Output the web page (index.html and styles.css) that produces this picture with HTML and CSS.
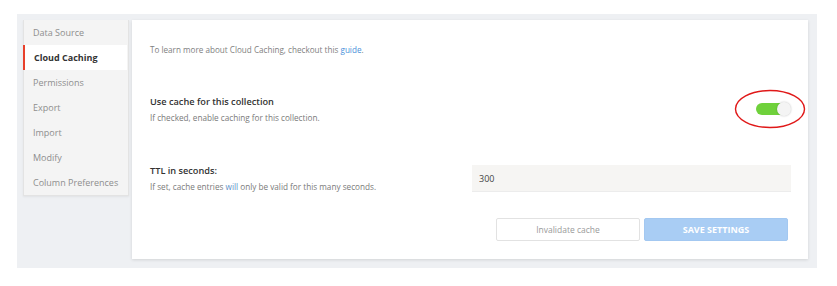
FILE: index.html
```html
<!DOCTYPE html>
<html>
  <head>
    <title>Cloud Caching</title>
    <link rel="stylesheet" href="styles.css">
  </head>
  <body>
    <div class="frame">
      <ul class="sidebar">
        <li>Data Source</li>
        <li class="active">Cloud Caching</li>
        <li>Permissions</li>
        <li>Export</li>
        <li>Import</li>
        <li>Modify</li>
        <li>Column Preferences</li>
      </ul>
      <div class="card">
        <p class="intro">To learn more about Cloud Caching, checkout this <a href="#">guide</a>.</p>

        <div class="setting setting-cache">
          <div class="setting-text">
            <div class="setting-title">Use cache for this collection</div>
            <div class="setting-desc">If checked, enable caching for this collection.</div>
          </div>
          <div class="toggle-wrap">
            <span class="toggle"><span class="knob"></span></span>
            <svg class="highlight" width="72" height="40" viewBox="0 0 72 40">
              <ellipse cx="36" cy="20" rx="34.5" ry="18.5" fill="none" stroke="#e01818" stroke-width="1.4" />
            </svg>
          </div>
        </div>

        <div class="setting setting-ttl">
          <div class="setting-text">
            <div class="setting-title">TTL in seconds:</div>
            <div class="setting-desc">If set, cache entries <span class="hl">will</span> only be valid for this many seconds.</div>
          </div>
          <input class="ttl-input" type="text" value="300">
        </div>

        <div class="actions">
          <button class="btn btn-outline">Invalidate cache</button>
          <button class="btn btn-primary">SAVE SETTINGS</button>
        </div>
      </div>
    </div>
  </body>
</html>
```

FILE: styles.css
```css
body {
  margin: 0;
  background: #ffffff;
  font-family: "Open Sans", "Liberation Sans", Arial, sans-serif;
}
.frame {
  display: flex;
  align-items: flex-start;
  width: 788px;
  height: 242px;
  margin: 14px 0 0 17px;
  padding: 6px;
  background: #eef0f3;
}
.sidebar {
  list-style: none;
  margin: 0;
  padding: 0;
  width: 104px;
  background: #f4f4f4;
  border: 1px solid #e3e3e3;
  border-top: none;
  box-shadow: 0 1px 2px rgba(0, 0, 0, 0.06);
}
.sidebar li {
  height: 25px;
  line-height: 25px;
  padding-left: 9px;
  font-size: 9px;
  color: #8e8e8e;
  white-space: nowrap;
}
.sidebar li.active {
  background: #ffffff;
  color: #333333;
  font-weight: 700;
  font-size: 9px;
  border-left: 2px solid #e8412c;
  padding-left: 9px;
  margin-left: -1px;
  margin-right: 1px;
}
.card {
  flex: 1;
  height: 239px;
  margin-left: 3px;
  margin-right: 3px;
  padding: 0 18px;
  background: #ffffff;
  box-shadow: 0 1px 3px rgba(0, 0, 0, 0.12);
  box-sizing: border-box;
}
.intro {
  margin: 0;
  padding-top: 23px;
  line-height: 14px;
  font-size: 8.15px;
  color: #7f7f7f;
}
.intro a {
  color: #4a90d9;
  text-decoration: none;
}
.setting {
  display: flex;
  justify-content: space-between;
  align-items: center;
}
.setting-cache {
  margin-top: 38px;
}
.setting-ttl {
  margin-top: 40px;
}
.setting-title {
  font-size: 9.2px;
  font-weight: 600;
  color: #333333;
  line-height: 14px;
}
.setting-desc {
  margin-top: 3px;
  font-size: 8.2px;
  color: #7a7a7a;
  line-height: 12px;
}
.hl {
  color: #5b8fc7;
}
.toggle-wrap {
  position: relative;
  width: 34px;
  height: 12px;
  margin-top: -1px;
}
.toggle {
  display: block;
  width: 34px;
  height: 12px;
  border-radius: 6px;
  background: #6fd13b;
  position: relative;
}
.knob {
  position: absolute;
  right: -1px;
  top: -1px;
  width: 14px;
  height: 14px;
  border-radius: 50%;
  background: #f4f4f4;
  box-shadow: 0 0 2px rgba(0, 0, 0, 0.25);
}
.highlight {
  position: absolute;
  left: -22px;
  top: -14px;
}
.ttl-input {
  width: 319px;
  height: 27px;
  box-sizing: border-box;
  border: none;
  border-bottom: 1px solid #ececec;
  background: #f6f5f3;
  padding: 0 7px;
  font-family: inherit;
  font-size: 9px;
  color: #444444;
  margin-right: -1px;
}
.actions {
  display: flex;
  justify-content: flex-end;
  gap: 4px;
  margin-top: 25px;
  margin-right: 2px;
}
.btn {
  width: 144px;
  height: 23px;
  border-radius: 2px;
  font-family: inherit;
  font-size: 8.5px;
  cursor: pointer;
}
.btn-outline {
  background: #ffffff;
  border: 1px solid #e2e2e2;
  color: #9a9a9a;
}
.btn-primary {
  background: #a9cdf4;
  border: 1px solid #a3c8f1;
  color: #ffffff;
  font-weight: 700;
  font-size: 9px;
}
```
